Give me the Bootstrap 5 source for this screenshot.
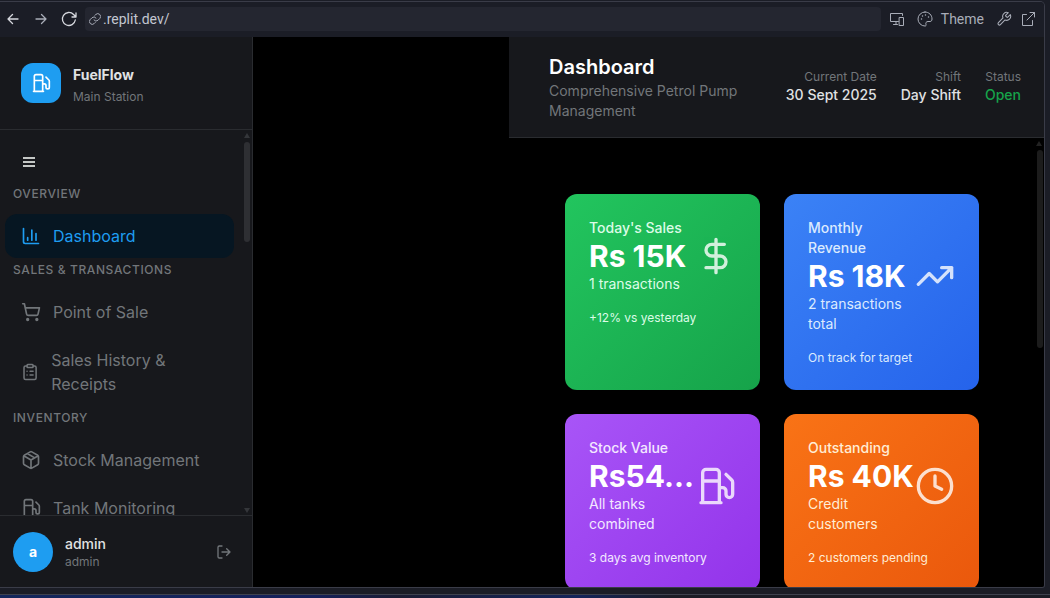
<!DOCTYPE html>
<html lang="en" data-bs-theme="dark">
<head>
<meta charset="utf-8">
<meta name="viewport" content="width=device-width, initial-scale=1">
<title>FuelFlow – Dashboard</title>
<link href="https://cdn.jsdelivr.net/npm/bootstrap@5.3.0/dist/css/bootstrap.min.css" rel="stylesheet">
<style>
  :root { --line: #2a2c30; --panel: #17181c; --muted: #72767a; --ink: #e0e2e3; --brand: #1e9df1; }
  body { font-family: Inter, "Liberation Sans", sans-serif; font-size: 14px; line-height: 20px; background: #1b1d26; color: var(--ink); }
  a { text-decoration: none; }
  svg { fill: none; stroke: currentColor; stroke-width: 2; stroke-linecap: round; stroke-linejoin: round; }
  button { background: none; border: 0; padding: 0; color: inherit; line-height: 1; display: flex; align-items: center; }
  .t12 { font-size: 12px; line-height: 16px; }
  .w500 { font-weight: 500; }
  .soft { color: var(--muted); }

  .frame { margin: 1px 5px 0 0; border: solid #3a3c48; border-width: 1px 1px 1px 0; border-radius: 0 5px 3px 0; min-height: 0; }
  .tools { height: 35px; padding: 0 8px 1px 5px; background: #1b1d26; color: #a9adb8; font-family: Roboto, "Noto Sans", sans-serif; }
  .tools svg { stroke-width: 1; }
  .tools .nav-ico { stroke-width: 1.3; }
  .tools .link-ico { stroke-width: 2; }
  .tools .tool-ico { stroke-width: 1.6; }
  .bright { color: #d6d8de; }
  .addr { height: 24px; background: #242630; border-radius: 4px; margin-left: 8px; padding: 0 4px; min-width: 0; }
  .addr input { background: none; border: 0; outline: 0; padding: 0 2px; color: #c3c7d0; min-width: 0; font-size: 14px; line-height: 20px; }

  .side { width: 253px; background: var(--panel); border-right: 1px solid var(--line); }
  .brand-row { padding: 26px 21px 24px; border-bottom: 1px solid var(--line); }
  .brand-name { padding-top: 2px; }
  .logo { width: 40px; height: 40px; border-radius: 12px; background: var(--brand); color: #fff; }
  .menu { overflow: hidden; padding: 20px 18px 0 5px; min-height: 0; }
  .menu h2 { font-size: 12px; line-height: 16px; font-weight: 500; letter-spacing: .05em; text-transform: uppercase; color: var(--muted); margin: 4px 0 12px; padding-left: 8px; }
  .burger { height: 24px; padding-left: 18px; margin-bottom: 12px; color: #c4c7c5; }
  .item { gap: 12px; padding: 10px 16px; font-size: 16px; line-height: 24px; color: var(--muted); border-radius: 12px; margin-bottom: 4px; }
  .item.on { background: #061622; color: var(--brand); }
  .user { padding: 16px 20px 15px 13px; border-top: 1px solid var(--line); }
  .avatar { width: 40px; height: 40px; background: var(--brand); color: #fff; }

  .bar { width: 6px; border-radius: 3px; background: #2e2f33; right: 2px; top: 12px; }
  .menu-bar { height: 100px; }
  .page-bar { height: 198px; right: 1px; background: #1c1c1c; }
  .arrow { right: 2px; width: 6px; height: 5px; background: #34363a; }
  .arrow-up { top: 3px; clip-path: polygon(50% 0, 100% 100%, 0 100%); }
  .arrow-down { bottom: 2px; clip-path: polygon(0 0, 100% 0, 50% 100%); }
  .page-arrow { background: #222; }

  .stage { background: #000; min-height: 0; overflow: hidden; }
  .gutter-col { width: 256px; }
  .main-col { min-width: 0; }
  .head { background: var(--panel); border-bottom: 1px solid var(--line); padding: 16px 23px 16px 40px; }
  .head h1 { font-size: 20px; line-height: 28px; font-weight: 600; margin: 0; }
  .open { color: #16a34a; }
  .page { overflow: hidden; min-height: 0; padding: 56px 65px 0 56px; }
  .tiles { display: grid; grid-template-columns: repeat(2, minmax(0, 1fr)); gap: 24px; }
  .tile { border-radius: 12px; padding: 24px; color: #fff; }
  .tile .num { font-size: 30px; line-height: 36px; font-weight: 700; white-space: nowrap; }
  .tile svg { opacity: .8; }
  .green { background: linear-gradient(135deg, #22c55e, #16a34a); --pale: #dcfce7; }
  .blue { background: linear-gradient(135deg, #3b82f6, #2563eb); --pale: #dbeafe; }
  .purple { background: linear-gradient(135deg, #a855f7, #9333ea); --pale: #f3e8ff; }
  .orange { background: linear-gradient(135deg, #f97316, #ea580c); --pale: #ffedd5; }
  .pale { color: var(--pale); }
  .strip { height: 10px; padding-top: 6px; }
  .strip div { height: 4px; border-top: 1px solid #3f424e; background: linear-gradient(90deg, #14275c, #15205a 30%, #1b1d33 38%, #14245a 55%, #1b1d26 64%); }
</style>
</head>
<body class="vh-100 d-flex flex-column overflow-hidden">
<svg width="0" height="0" class="position-absolute" aria-hidden="true">
  <symbol id="pump" viewBox="0 0 24 24"><path d="M3 22h12M4 9h10M14 22V4a2 2 0 0 0-2-2H6a2 2 0 0 0-2 2v18M14 13h2a2 2 0 0 1 2 2v2a2 2 0 0 0 4 0V9.830a2 2 0 0 0-.59-1.420L18 5"/></symbol>
</svg>

<div class="frame flex-grow-1 d-flex flex-column overflow-hidden">
  <div class="tools d-flex align-items-center flex-shrink-0">
    <button aria-label="Back" class="bright"><svg class="nav-ico" width="16" height="16" viewBox="0 0 16 16"><path d="M13 8H3M7.500 3.500L3 8l4.500 4.500"/></svg></button>
    <button aria-label="Forward" class="ms-2 ps-1"><svg class="nav-ico" width="16" height="16" viewBox="0 0 16 16"><path d="M3 8h10M8.500 3.500L13 8l-4.500 4.500"/></svg></button>
    <button aria-label="Reload" class="ms-2 ps-1 bright"><svg class="nav-ico" width="16" height="16" viewBox="0 0 16 16"><path d="M14.300 9a6.500 6.500 0 1 1-1.700-5.500l2.400 2.500M15 2v4h-4"/></svg></button>
    <label class="addr d-flex align-items-center flex-grow-1">
      <svg width="12" height="12" viewBox="0 0 24 24" class="link-ico flex-shrink-0"><path d="M10 14a5.500 5.500 0 0 0 8 .5l3.500-3.500a5.500 5.500 0 0 0-8-8l-2 2M14 10a5.500 5.500 0 0 0-8-.5L2.500 13a5.500 5.500 0 0 0 8 8l2-2"/></svg>
      <input type="text" value=".replit.dev/" aria-label="Address" class="flex-grow-1">
    </label>
    <button aria-label="Devices" class="ms-2"><svg width="16" height="16" viewBox="0 0 16 16"><path d="M9.500 10.500h-8v-8h12v2M4.500 13.500h4M7 10.500v3M10.500 6.500h4v8h-4z"/></svg></button>
    <button class="ms-2 ps-1 gap-2"><svg width="16" height="16" viewBox="0 0 16 16"><path d="M8 1a7 7 0 1 0 0 14c1 0 1.300-.7 1-1.500-.6-1.600.2-3 2-3h2c1.400 0 2-1 2-2.500C15 4 12 1 8 1z"/><path d="M4.500 8v.1M5.500 5v.1M8.500 4v.1M11.500 6v.1" stroke-width="1.500"/></svg><span>Theme</span></button>
    <button aria-label="Settings" class="ms-2 ps-1"><svg class="tool-ico" width="16" height="16" viewBox="0 0 24 24"><path d="M14.700 6.300a1 1 0 0 0 0 1.400l1.600 1.600a1 1 0 0 0 1.400 0l3.770-3.770a6 6 0 0 1-7.940 7.940l-6.910 6.910a2.120 2.120 0 0 1-3-3l6.910-6.910a6 6 0 0 1 7.940-7.940z"/></svg></button>
    <button aria-label="Open in new tab" class="ms-2"><svg width="16" height="16" viewBox="0 0 16 16"><path d="M6.500 3.500h-4v11h10v-5M10 1.500h4.500V6M14.500 1.500L7 9"/></svg></button>
  </div>

  <div class="stage d-flex flex-grow-1">
    <aside class="side d-flex flex-column flex-shrink-0">
      <div class="brand-row d-flex align-items-start gap-2">
        <div class="logo d-flex align-items-center justify-content-center"><svg width="20" height="20"><use href="#pump"/></svg></div>
        <div class="brand-name ms-1"><div class="fw-bold mb-1">FuelFlow</div><div class="t12 soft">Main Station</div></div>
      </div>
      <div class="position-relative flex-grow-1 d-flex flex-column overflow-hidden">
        <nav class="menu flex-grow-1">
          <button class="burger" aria-label="Toggle menu"><svg width="12" height="12" viewBox="0 0 12 12" style="stroke-linecap:butt"><path d="M0 2h12M0 6h12M0 10h12"/></svg></button>
          <h2>Overview</h2>
          <a href="#" class="item on d-flex align-items-center"><svg width="20" height="20" viewBox="0 0 24 24"><path d="M3 3v16a2 2 0 0 0 2 2h16M18 17V9M13 17V5M8 17v-3"/></svg><span>Dashboard</span></a>
          <h2>Sales &amp; Transactions</h2>
          <a href="#" class="item d-flex align-items-center"><svg width="20" height="20" viewBox="0 0 24 24"><circle cx="8" cy="21" r="1"/><circle cx="19" cy="21" r="1"/><path d="M2.050 2.050h2l2.660 12.420a2 2 0 0 0 2 1.580h9.780a2 2 0 0 0 1.950-1.570l1.650-7.430H5.120"/></svg><span>Point of Sale</span></a>
          <a href="#" class="item d-flex align-items-center"><svg width="20" height="20" viewBox="0 0 24 24"><rect x="8" y="2" width="8" height="4" rx="1"/><path d="M16 4h2a2 2 0 0 1 2 2v14a2 2 0 0 1-2 2H6a2 2 0 0 1-2-2V6a2 2 0 0 1 2-2h2M12 11h4M12 16h4M8 11h.01M8 16h.01"/></svg><span>Sales History &amp; Receipts</span></a>
          <h2>Inventory</h2>
          <a href="#" class="item d-flex align-items-center"><svg width="20" height="20" viewBox="0 0 24 24"><path d="M11 21.730a2 2 0 0 0 2 0l7-4A2 2 0 0 0 21 16V8a2 2 0 0 0-1-1.730l-7-4a2 2 0 0 0-2 0l-7 4A2 2 0 0 0 3 8v8a2 2 0 0 0 1 1.730zM12 22V12M3.290 7L12 12l8.710-5M7.500 4.270l9 5.150"/></svg><span>Stock Management</span></a>
          <a href="#" class="item d-flex align-items-center"><svg width="20" height="20"><use href="#pump"/></svg><span>Tank Monitoring</span></a>
        </nav>
        <div class="arrow arrow-up position-absolute"></div>
        <div class="bar menu-bar position-absolute"></div>
        <div class="arrow arrow-down position-absolute"></div>
      </div>
      <div class="user d-flex align-items-center">
        <div class="avatar rounded-circle d-flex align-items-center justify-content-center fw-bold">a</div>
        <div class="ms-2 ps-1 flex-grow-1"><div class="w500">admin</div><div class="t12 soft">admin</div></div>
        <button class="soft" aria-label="Log out"><svg width="16" height="16" viewBox="0 0 24 24"><path d="M9 21H5a2 2 0 0 1-2-2V5a2 2 0 0 1 2-2h4M16 17l5-5-5-5M21 12H9"/></svg></button>
      </div>
    </aside>
    <div class="gutter-col flex-shrink-0"></div>

    <main class="main-col flex-grow-1 d-flex flex-column">
      <header class="head d-flex align-items-center justify-content-between">
        <div class="flex-grow-1"><h1>Dashboard</h1><div class="soft">Comprehensive Petrol Pump Management</div></div>
        <div class="d-flex gap-4 text-end text-nowrap ms-4">
          <div><div class="t12 soft">Current Date</div><div class="w500">30 Sept 2025</div></div>
          <div><div class="t12 soft">Shift</div><div class="w500">Day Shift</div></div>
          <div><div class="t12 soft">Status</div><div class="w500 open">Open</div></div>
        </div>
      </header>
      <div class="position-relative flex-grow-1 overflow-hidden">
        <div class="page">
          <div class="tiles">
            <section class="tile green">
              <div class="d-flex align-items-center justify-content-between">
                <div class="flex-grow-1"><div class="w500 pale">Today's Sales</div><div class="num">Rs 15K</div><div class="pale">1 transactions</div></div>
                <svg class="flex-shrink-0" width="40" height="40" viewBox="0 0 24 24"><path d="M12 2v20M17 5H9.500a3.500 3.500 0 0 0 0 7h5a3.500 3.500 0 0 1 0 7H6"/></svg>
              </div>
              <div class="t12 pale mt-3">+12% vs yesterday</div>
            </section>
            <section class="tile blue">
              <div class="d-flex align-items-center justify-content-between">
                <div class="flex-grow-1"><div class="w500 pale">Monthly Revenue</div><div class="num">Rs 18K</div><div class="pale">2 transactions total</div></div>
                <svg class="flex-shrink-0" width="40" height="40" viewBox="0 0 24 24"><path d="M22 7l-8.500 8.500-5-5L2 17M16 7h6v6"/></svg>
              </div>
              <div class="t12 pale mt-3">On track for target</div>
            </section>
            <section class="tile purple">
              <div class="d-flex align-items-center justify-content-between">
                <div class="flex-grow-1"><div class="w500 pale">Stock Value</div><div class="num">Rs54...</div><div class="pale">All tanks combined</div></div>
                <svg class="flex-shrink-0" width="40" height="40"><use href="#pump"/></svg>
              </div>
              <div class="t12 pale mt-3">3 days avg inventory</div>
            </section>
            <section class="tile orange">
              <div class="d-flex align-items-center justify-content-between">
                <div class="flex-grow-1"><div class="w500 pale">Outstanding</div><div class="num">Rs 40K</div><div class="pale">Credit customers</div></div>
                <svg class="flex-shrink-0" width="40" height="40" viewBox="0 0 24 24"><circle cx="12" cy="12" r="10"/><path d="M12 6v6l4 2"/></svg>
              </div>
              <div class="t12 pale mt-3">2 customers pending</div>
            </section>
          </div>
        </div>
        <div class="arrow arrow-up page-arrow position-absolute"></div>
        <div class="bar page-bar position-absolute"></div>
      </div>
    </main>
  </div>
</div>
<div class="strip flex-shrink-0"><div></div></div>
<script src="https://cdn.jsdelivr.net/npm/bootstrap@5.3.0/dist/js/bootstrap.bundle.min.js"></script>
</body>
</html>
